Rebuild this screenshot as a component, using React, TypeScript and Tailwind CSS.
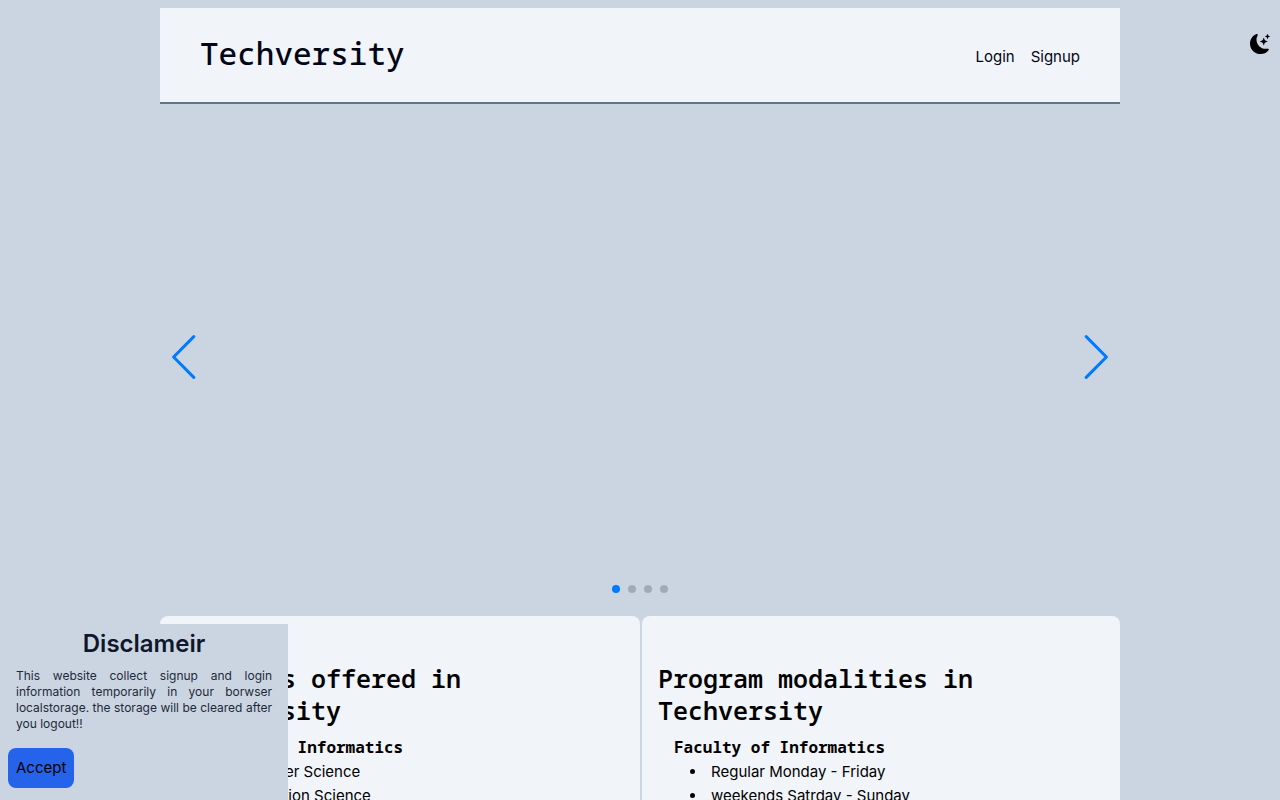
import { BsMoonStarsFill } from "react-icons/bs";

const offers = {
  title: "Programs offered in Techversity",
  faculty: "Faculty of Informatics",
  items: ["Computer Science", "Information Science"],
};

const modalities = {
  title: "Program modalities in Techversity",
  faculty: "Faculty of Informatics",
  items: ["Regular Monday - Friday", "weekends Satrday - Sunday"],
};

function Card({ title, faculty, items }: typeof offers) {
  return (
    <section className="h-full rounded-lg bg-[#f1f5f9] px-4 pt-[46px] pb-12">
      <h2 className="pr-24 font-['Noto_Sans_Mono','DejaVu_Sans_Mono',monospace] text-[25px] leading-8 font-semibold">{title}</h2>
      <div className="px-4 pt-[9px]">
        <h3 className="pb-px font-['Noto_Sans_Mono','DejaVu_Sans_Mono',monospace] text-base font-bold">{faculty}</h3>
        <ul className="list-inside list-disc pl-4">
          {items.map((item) => (
            <li key={item}>{item}</li>
          ))}
        </ul>
      </div>
    </section>
  );
}

function Chevron({ d }: { d: string }) {
  return (
    <svg width="27" height="44" viewBox="0 0 27 44" fill="none" stroke="#007aff" strokeWidth="3" strokeLinecap="round" strokeLinejoin="round" aria-hidden="true">
      <path d={d} />
    </svg>
  );
}

export default function App() {
  return (
    <div className="h-screen overflow-hidden bg-[#cbd5e1] pt-2 font-['Inter',sans-serif] text-[15px] leading-6 text-black">
      <button aria-label="Toggle dark mode" className="fixed top-[34px] right-[10px]">
        <BsMoonStarsFill size={20} />
      </button>
      <div className="mx-auto w-3/4">
        <header className="flex items-center justify-between border-b-2 border-[#64748b] bg-[#f1f5f9] px-10 pt-6 pb-7 text-[#020617]">
          <h1 className="font-['Noto_Sans_Mono','DejaVu_Sans_Mono',monospace] text-[31px] leading-[42px] font-medium">Techversity</h1>
          <nav className="flex gap-4 pt-2">
            <a href="#login">Login</a>
            <a href="#signup">Signup</a>
          </nav>
        </header>
        <section aria-label="Slides" className="flex h-[504px] flex-col pb-[15px]">
          <div className="flex grow items-center justify-between px-[10px] pt-[25px]">
            <button aria-label="Previous slide"><Chevron d="M23.8 1.6 L3.6 22 L23.8 42.4" /></button>
            <button aria-label="Next slide"><Chevron d="M3.2 1.6 L23.4 22 L3.2 42.4" /></button>
          </div>
          <div className="flex justify-center gap-2">
            <button aria-label="Slide 1" className="size-2 rounded-full bg-[#007aff]" />
            <button aria-label="Slide 2" className="size-2 rounded-full bg-black/20" />
            <button aria-label="Slide 3" className="size-2 rounded-full bg-black/20" />
            <button aria-label="Slide 4" className="size-2 rounded-full bg-black/20" />
          </div>
        </section>
        <main className="mt-2 grid grid-cols-2">
          <Card {...offers} />
          <div className="pl-0.5">
            <Card {...modalities} />
          </div>
        </main>
      </div>
      <aside className="fixed bottom-0 left-0 h-44 w-72 bg-[#cbd5e1] p-2 text-[#0f172a]">
        <h2 className="-mt-1 text-center text-2xl font-semibold">Disclameir</h2>
        <p className="p-2 pb-4 text-justify text-xs text-[#1e293b]">
          This website collect signup and login information temporarily in your borwser localstorage. the storage will be cleared after you logout!!
        </p>
        <button className="rounded-lg bg-[#2563eb] p-2 text-black">Accept</button>
      </aside>
    </div>
  );
}
